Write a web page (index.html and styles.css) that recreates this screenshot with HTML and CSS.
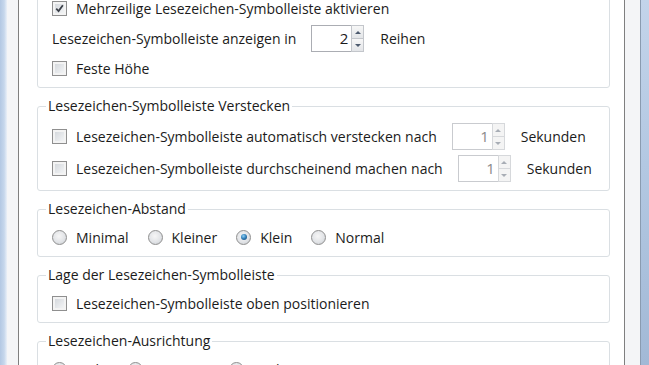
FILE: index.html
```html
<!DOCTYPE html>
<html lang="de">
<head>
    <meta charset="UTF-8">
    <meta name="viewport" content="width=device-width, initial-scale=1.0">
    <title>Lesezeichen-Symbolleiste</title>
    <link rel="stylesheet" href="styles.css">
</head>
<body>

    <div class="window">
        <div class="frame frame-left"></div>
        <div class="gutter gutter-left"></div>

        <div class="page">
            <fieldset class="group group-first">
                <div class="row">
                    <span class="box checked"><svg viewBox="0 0 14 14"><path d="M3.5 7.2 L6 9.8 L10.6 3.6" /></svg></span>
                    <span>Mehrzeilige Lesezeichen-Symbolleiste aktivieren</span>
                </div>
                <div class="row row-spin">
                    <span>Lesezeichen-Symbolleiste anzeigen in</span>
                    <span class="spin">
                        <span class="spin-value">2</span>
                        <span class="spin-buttons">
                            <span class="spin-btn"><span class="arrow up"></span></span>
                            <span class="spin-btn"><span class="arrow down"></span></span>
                        </span>
                    </span>
                    <span>Reihen</span>
                </div>
                <div class="row">
                    <span class="box"></span>
                    <span>Feste Höhe</span>
                </div>
            </fieldset>

            <fieldset class="group group-hide">
                <legend>Lesezeichen-Symbolleiste Verstecken</legend>
                <div class="row row-spin">
                    <span class="box"></span>
                    <span>Lesezeichen-Symbolleiste automatisch verstecken nach</span>
                    <span class="spin disabled">
                        <span class="spin-value">1</span>
                        <span class="spin-buttons">
                            <span class="spin-btn"><span class="arrow up"></span></span>
                            <span class="spin-btn"><span class="arrow down"></span></span>
                        </span>
                    </span>
                    <span>Sekunden</span>
                </div>
                <div class="row row-spin">
                    <span class="box"></span>
                    <span>Lesezeichen-Symbolleiste durchscheinend machen nach</span>
                    <span class="spin disabled">
                        <span class="spin-value">1</span>
                        <span class="spin-buttons">
                            <span class="spin-btn"><span class="arrow up"></span></span>
                            <span class="spin-btn"><span class="arrow down"></span></span>
                        </span>
                    </span>
                    <span>Sekunden</span>
                </div>
            </fieldset>

            <fieldset class="group">
                <legend>Lesezeichen-Abstand</legend>
                <div class="row radios">
                    <span class="option"><span class="radio"></span>Minimal</span>
                    <span class="option"><span class="radio"></span>Kleiner</span>
                    <span class="option"><span class="radio selected"></span>Klein</span>
                    <span class="option"><span class="radio"></span>Normal</span>
                </div>
            </fieldset>

            <fieldset class="group">
                <legend>Lage der Lesezeichen-Symbolleiste</legend>
                <div class="row">
                    <span class="box"></span>
                    <span>Lesezeichen-Symbolleiste oben positionieren</span>
                </div>
            </fieldset>

            <fieldset class="group">
                <legend>Lesezeichen-Ausrichtung</legend>
                <div class="row radios">
                    <span class="option"><span class="radio"></span>Links</span>
                    <span class="option"><span class="radio"></span>Zentriert</span>
                    <span class="option"><span class="radio"></span>Rechts</span>
                </div>
            </fieldset>
        </div>

        <div class="gutter gutter-right"></div>
        <div class="frame frame-right"></div>
    </div>

</body>
</html>
```

FILE: styles.css
```css
html, body {
    margin: 0;
    height: 100%;
    overflow: hidden;
}
body {
    font-family: "Open Sans", "Noto Sans", sans-serif;
    font-size: 14px;
    color: #1b1b1b;
    background-color: #ffffff;
}
.window {
    display: flex;
    height: 365px;
}
.frame-left {
    width: 7px;
    background: linear-gradient(90deg, #b3c8e3 0%, #c6d7ec 60%, #eaf0f8 100%);
}
.frame-right {
    width: 8px;
    border-left: 1px solid #8a9bb0;
    background: linear-gradient(180deg, #c3d4ea 0%, #b3c8e2 45%, #a2b9d6 100%);
}
.gutter {
    background-color: #f4f5f7;
}
.gutter-left {
    width: 11px;
}
.gutter-right {
    width: 15px;
}
.page {
    width: 605px;
    border-left: 1px solid #7f7f7f;
    border-right: 1px solid #7f7f7f;
    background-color: #ffffff;
    display: flex;
    flex-direction: column;
    gap: 10px;
    overflow: hidden;
}
.group {
    margin: 0 14px 0 18px;
    padding: 7px 14px 6px 14px;
    border: 1px solid #dadfe3;
    border-radius: 3px;
    min-width: 0;
}
.group-first {
    margin-top: -20px;
    padding-top: 15px;
}
.group-first .row {
    height: 25px;
}
.group-first .row-spin {
    height: 27px;
}
.group-first .row + .row {
    margin-top: 4px;
}
.group-hide {
    padding-top: 9px;
    padding-bottom: 8px;
}
legend {
    margin-left: -6px;
    padding: 0 2px;
    line-height: 16px;
}
.row {
    display: flex;
    align-items: center;
    height: 26px;
}
.row + .row {
    margin-top: 5px;
}
.row-spin {
    height: 27px;
}
.box {
    width: 13px;
    height: 13px;
    margin-right: 9px;
    border: 1px solid #8f8f8f;
    background: linear-gradient(135deg, #cfd3d8 0%, #eceef0 70%, #f7f7f7 100%);
    box-shadow: inset 0 0 0 2px #f3f3f3;
    flex-shrink: 0;
}
.box svg {
    display: block;
    width: 13px;
    height: 13px;
}
.box svg path {
    fill: none;
    stroke: #3a3f47;
    stroke-width: 1.9;
}
.spin {
    display: flex;
    margin: 0 16px 0 15px;
}
.spin-value {
    width: 36px;
    height: 25px;
    line-height: 25px;
    border: 1px solid #abadb3;
    border-right: none;
    text-align: right;
    padding-right: 3px;
    font-size: 15px;
}
.spin-buttons {
    display: flex;
    flex-direction: column;
    width: 13px;
}
.spin-btn {
    flex: 1;
    display: flex;
    align-items: center;
    justify-content: center;
    border: 1px solid #c3c6cb;
    background: linear-gradient(180deg, #f7f7f7, #e3e5e8);
}
.spin-btn + .spin-btn {
    border-top: none;
}
.arrow {
    width: 0;
    height: 0;
    border-left: 3px solid transparent;
    border-right: 3px solid transparent;
}
.arrow.up {
    border-bottom: 3px solid #4d5a6e;
}
.arrow.down {
    border-top: 3px solid #4d5a6e;
}
.spin.disabled .spin-value {
    color: #8a8a8a;
    border-color: #c9cbcf;
}
.spin.disabled .spin-btn {
    border-color: #d6d8db;
    background: #f4f4f4;
}
.spin.disabled .arrow.up {
    border-bottom-color: #a8adb5;
}
.spin.disabled .arrow.down {
    border-top-color: #a8adb5;
}
.radios {
    gap: 19px;
}
.option {
    display: flex;
    align-items: center;
}
.radio {
    width: 13px;
    height: 13px;
    margin-right: 9px;
    border: 1px solid #8f8f8f;
    border-radius: 50%;
    background: radial-gradient(circle at 45% 40%, #f6f6f6 0%, #e2e4e7 55%, #c4c8cd 100%);
    display: flex;
    align-items: center;
    justify-content: center;
}
.radio.selected::after {
    content: "";
    width: 6px;
    height: 6px;
    border-radius: 50%;
    background: radial-gradient(circle at 40% 35%, #8fd0f5 0%, #2f7cb6 50%, #163f66 100%);
}
```
